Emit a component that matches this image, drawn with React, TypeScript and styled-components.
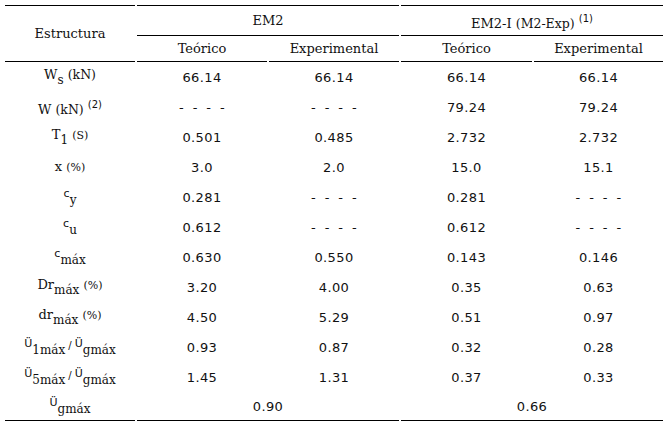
import styled, { createGlobalStyle } from "styled-components";

const GlobalStyle = createGlobalStyle`
  html, body {
    margin: 0;
    padding: 0;
    background: #ffffff;
  }
`;

const Table = styled.table`
  margin: 5px 0 0 3px;
  border-collapse: separate;
  border-spacing: 2px 0;
  table-layout: fixed;
  color: #111;
  font-family: "DejaVu Serif", "Liberation Serif", serif;
  font-size: 13px;
  line-height: 15px;
`;

const Row = styled.tr<{ $h: number }>`
  height: ${(p) => p.$h}px;
`;

const HeadCell = styled.th<{ $top?: boolean; $bottom?: boolean }>`
  padding: 0;
  font-weight: normal;
  text-align: center;
  vertical-align: middle;
  white-space: nowrap;
  border-top: ${(p) => (p.$top ? "1px solid #000" : "none")};
  border-bottom: ${(p) => (p.$bottom ? "1px solid #000" : "none")};
`;

const LabelCell = styled.td`
  padding: 0;
  text-align: center;
  vertical-align: middle;
  white-space: nowrap;
`;

const NumCell = styled(LabelCell)`
  font-family: "DejaVu Sans", "Liberation Sans", sans-serif;
  font-size: 13px;
  letter-spacing: 0.4px;
`;

const FootLabel = styled(LabelCell)`
  border-bottom: 1px solid #000;
`;

const FootNum = styled(NumCell)`
  border-bottom: 1px solid #000;
`;

const Dashes = styled.span`
  word-spacing: 4px;
`;

const Sub = styled.span`
  font-size: 12px;
  vertical-align: -5px;
`;

const Sup = styled.span`
  font-family: "DejaVu Sans", sans-serif;
  font-size: 10px;
  vertical-align: 6px;
`;

const Unit = styled.span`
  font-size: 12.5px;
`;

const Pct = styled.span`
  font-size: 11px;
`;

const Small = styled.span`
  font-family: "DejaVu Sans", sans-serif;
  font-size: 11px;
  vertical-align: 2px;
`;

const Slash = styled.span`
  font-family: "DejaVu Sans", sans-serif;
  font-size: 10px;
  margin: 0 3px;
`;

type DataRow = {
  label: React.ReactNode;
  values: string[];
};

const dash = "- - - -";

const rows: DataRow[] = [
  {
    label: (
      <>
        W<Sub>s</Sub> <Unit>(kN)</Unit>
      </>
    ),
    values: ["66.14", "66.14", "66.14", "66.14"],
  },
  {
    label: (
      <>
        W <Unit>(kN)</Unit> <Sup>(2)</Sup>
      </>
    ),
    values: [dash, dash, "79.24", "79.24"],
  },
  {
    label: (
      <>
        T<Sub>1</Sub> <Pct>(S)</Pct>
      </>
    ),
    values: ["0.501", "0.485", "2.732", "2.732"],
  },
  {
    label: (
      <>
        x <Pct>(%)</Pct>
      </>
    ),
    values: ["3.0", "2.0", "15.0", "15.1"],
  },
  {
    label: (
      <>
        <Small>c</Small>
        <Sub>y</Sub>
      </>
    ),
    values: ["0.281", dash, "0.281", dash],
  },
  {
    label: (
      <>
        <Small>c</Small>
        <Sub>u</Sub>
      </>
    ),
    values: ["0.612", dash, "0.612", dash],
  },
  {
    label: (
      <>
        <Small>c</Small>
        <Sub>máx</Sub>
      </>
    ),
    values: ["0.630", "0.550", "0.143", "0.146"],
  },
  {
    label: (
      <>
        Dr<Sub>máx</Sub> <Pct>(%)</Pct>
      </>
    ),
    values: ["3.20", "4.00", "0.35", "0.63"],
  },
  {
    label: (
      <>
        dr<Sub>máx</Sub> <Pct>(%)</Pct>
      </>
    ),
    values: ["4.50", "5.29", "0.51", "0.97"],
  },
  {
    label: (
      <>
        <Small>Ü</Small>
        <Sub>1máx</Sub>
        <Slash>/</Slash>
        <Small>Ü</Small>
        <Sub>gmáx</Sub>
      </>
    ),
    values: ["0.93", "0.87", "0.32", "0.28"],
  },
  {
    label: (
      <>
        <Small>Ü</Small>
        <Sub>5máx</Sub>
        <Slash>/</Slash>
        <Small>Ü</Small>
        <Sub>gmáx</Sub>
      </>
    ),
    values: ["1.45", "1.31", "0.37", "0.33"],
  },
];

const App = () => {
  return (
    <>
      <GlobalStyle />
      <Table>
        <colgroup>
          <col style={{ width: 130 }} />
          <col style={{ width: 130 }} />
          <col style={{ width: 130 }} />
          <col style={{ width: 131 }} />
          <col style={{ width: 129 }} />
        </colgroup>
        <thead>
          <Row $h={31}>
            <HeadCell rowSpan={2} $top $bottom>
              Estructura
            </HeadCell>
            <HeadCell colSpan={2} $top $bottom>
              EM2
            </HeadCell>
            <HeadCell colSpan={2} $top $bottom>
              EM2-I <Unit>(M2-Exp)</Unit> <Sup>(1)</Sup>
            </HeadCell>
          </Row>
          <Row $h={26}>
            <HeadCell $bottom>Teórico</HeadCell>
            <HeadCell $bottom>Experimental</HeadCell>
            <HeadCell $bottom>Teórico</HeadCell>
            <HeadCell $bottom>Experimental</HeadCell>
          </Row>
        </thead>
        <tbody>
          {rows.map((row, index) => {
            return (
              <Row $h={30} key={index}>
                <LabelCell>{row.label}</LabelCell>
                {row.values.map((value, i) => {
                  return (
                    <NumCell key={i}>
                      {value === dash ? <Dashes>{value}</Dashes> : value}
                    </NumCell>
                  );
                })}
              </Row>
            );
          })}
          <Row $h={29}>
            <FootLabel>
              <Small>Ü</Small>
              <Sub>gmáx</Sub>
            </FootLabel>
            <FootNum colSpan={2}>0.90</FootNum>
            <FootNum colSpan={2}>0.66</FootNum>
          </Row>
        </tbody>
      </Table>
    </>
  );
};

export default App;
